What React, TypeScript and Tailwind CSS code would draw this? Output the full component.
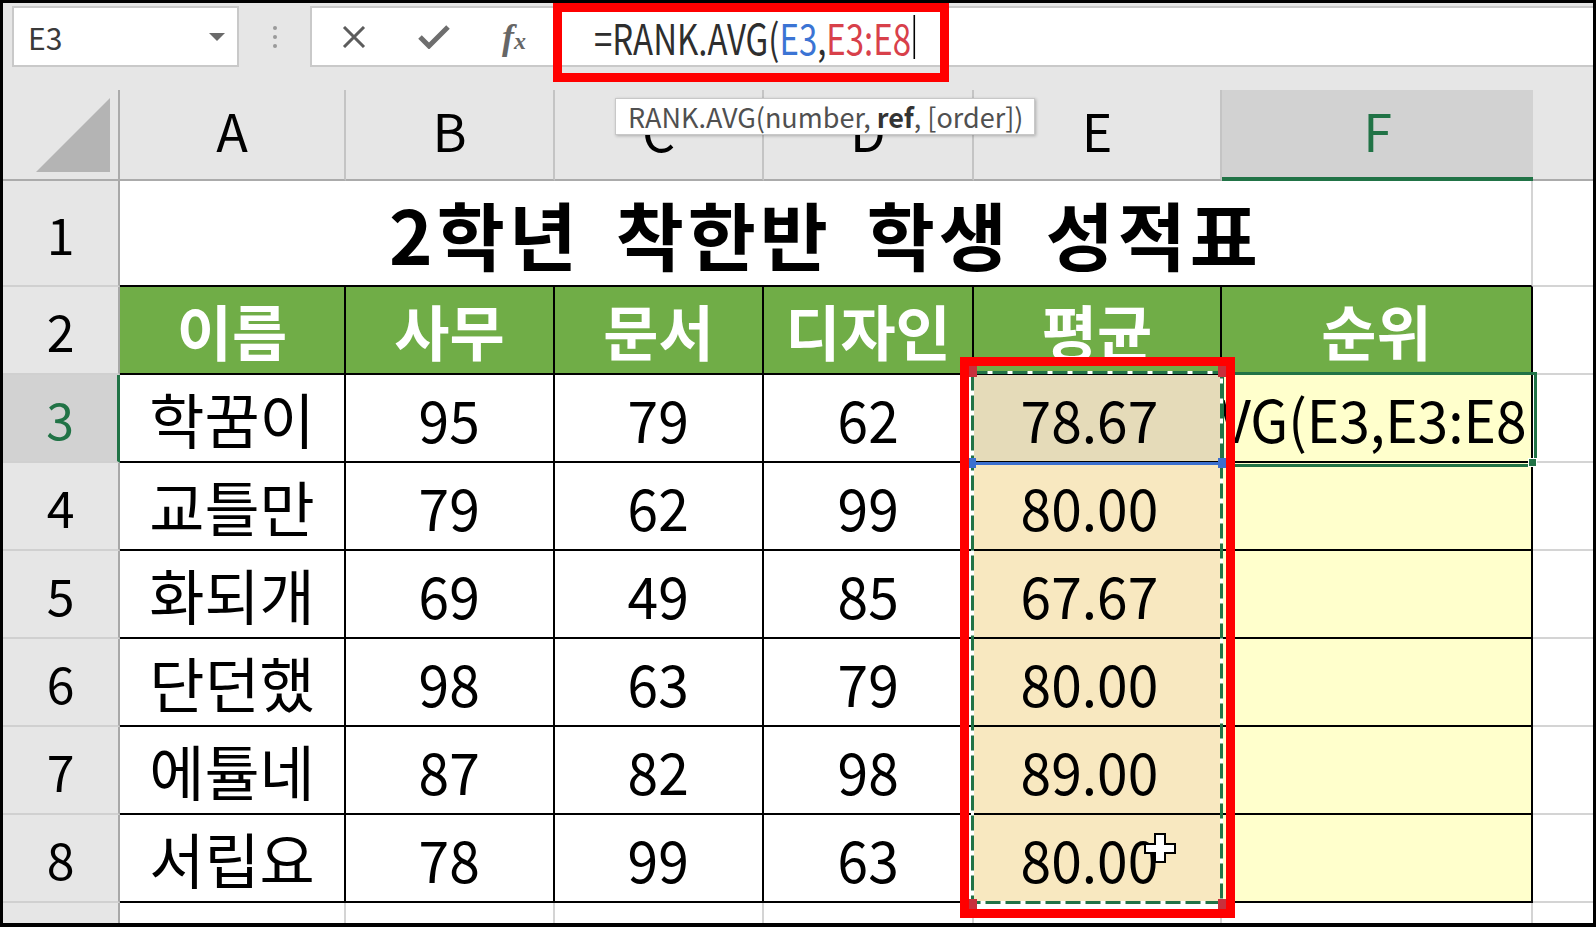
import React from "react";

const heads = ["이름", "사무", "문서", "디자인", "평균", "순위"];
const rows = [
  ["학꿈이", "95", "79", "62", "78.67"],
  ["교틀만", "79", "62", "99", "80.00"],
  ["화되개", "69", "49", "85", "67.67"],
  ["단던했", "98", "63", "79", "80.00"],
  ["에튤네", "87", "82", "98", "89.00"],
  ["서립요", "78", "99", "63", "80.00"],
];

function Num({ children }: { children: React.ReactNode }) {
  return <span className="inline-block scale-x-[0.95] text-[58px] leading-none text-black">{children}</span>;
}

export default function App() {
  return (
    <div className="relative h-[927px] w-[1596px] overflow-hidden border-t-[3px] border-r-[3px] border-b-[4px] border-l-[3px] border-black bg-[#e6e6e6] font-['Noto_Sans_CJK_KR','Noto_Sans',sans-serif]">
      {/* toolbar */}
      <div className="flex h-[87px] items-start pt-[3px]">
        <div className="ml-[9px] flex h-[61px] w-[227px] items-center justify-between border-2 border-[#c9c9c9] bg-white pr-[12px] pl-[14px]">
          <span className="text-[30px] leading-none text-[#3a3a3a]">E3</span>
          <svg width="16" height="8" viewBox="0 0 16 8"><path d="M0 0h16L8 8z" fill="#6a6a6a" /></svg>
        </div>
        <div className="flex h-[61px] w-[71px] flex-col items-center justify-center gap-[5px]">
          <span className="h-[4px] w-[4px] rounded-full bg-[#9a9a9a]" />
          <span className="h-[4px] w-[4px] rounded-full bg-[#9a9a9a]" />
          <span className="h-[4px] w-[4px] rounded-full bg-[#9a9a9a]" />
        </div>
        <div className="flex h-[61px] flex-1 items-center border-2 border-r-0 border-[#c9c9c9] bg-white">
          <div className="ml-[2px] flex w-[80px] justify-center">
            <svg width="24" height="22" viewBox="0 0 24 22"><path d="M2 1l20 20M22 1L2 21" stroke="#5c5c5c" strokeWidth="3" /></svg>
          </div>
          <div className="flex w-[80px] justify-center">
            <svg width="32" height="24" viewBox="0 0 32 24"><path d="M2 12l9 9L30 2" stroke="#6e6e6e" strokeWidth="5" fill="none" /></svg>
          </div>
          <div className="flex w-[80px] justify-center">
            <span className="font-['Liberation_Serif',serif] text-[36px] leading-none font-bold text-[#666] italic">
              f<span className="text-[24px]">x</span>
            </span>
          </div>
          <div className="ml-[40px] flex items-center">
            <span className="inline-flex origin-left scale-x-[0.785] items-center text-[42px] leading-none whitespace-nowrap text-[#2e2e2e]">
              =RANK.AVG(<span className="text-[#3b74d4]">E3</span>,<span className="text-[#d8404a]">E3:E8</span>
              <span className="ml-[3px] inline-block h-[44px] w-[2px] bg-black" />
            </span>
          </div>
        </div>
      </div>

      {/* sheet */}
      <div className="grid grid-cols-[117px_226px_209px_209px_210px_248px_311px_60px] grid-rows-[91px_106px_88px_88px_88px_88px_88px_88px_88px_20px]">
        {/* column headers */}
        <div className="relative border-r-2 border-b-2 border-[#ababab]">
          <svg className="absolute right-[8px] bottom-[7px]" width="74" height="74" viewBox="0 0 74 74"><path d="M74 0v74H0z" fill="#b4b4b4" /></svg>
        </div>
        {["A", "B", "C", "D", "E"].map((c) => (
          <div key={c} className="flex items-center justify-center border-r-2 border-b-2 border-r-[#c4c4c4] border-b-[#ababab] pb-[10px] text-[52px] leading-none text-black">
            {c}
          </div>
        ))}
        <div className="flex items-center justify-center border-b-[4px] border-[#217346] bg-[#d2d2d2] pb-[8px] text-[52px] leading-none text-[#217346]">F</div>
        <div className="border-b-2 border-[#ababab]" />

        {/* row 1 */}
        <div className="flex items-center justify-center border-r-2 border-b-2 border-r-[#a8a8a8] border-b-[#d0d0d0] text-[50px] leading-none text-black">1</div>
        <div className="col-span-6 flex items-center justify-center border-r-2 border-b-2 border-r-[#d4d4d4] border-b-black bg-white">
          <span className="text-[74px] leading-none font-bold tracking-[4px] [word-spacing:14px] text-black">2학년 착한반 학생 성적표</span>
        </div>
        <div className="border-b-2 border-[#d4d4d4] bg-white" />

        {/* row 2 */}
        <div className="flex items-center justify-center border-r-2 border-b-2 border-r-[#a8a8a8] border-b-[#d0d0d0] text-[50px] leading-none text-black">2</div>
        {heads.map((h) => (
          <div key={h} className="flex items-center justify-center border-r-2 border-b-2 border-black bg-[#70ad47] text-[60px] leading-none font-bold text-white">
            {h}
          </div>
        ))}
        <div className="border-b-2 border-[#d4d4d4] bg-white" />

        {/* data rows */}
        {rows.map((r, i) => (
          <React.Fragment key={i}>
            <div
              className={
                i === 0
                  ? "flex items-center justify-center border-r-[3px] border-b-2 border-r-[#217346] border-b-[#d0d0d0] bg-[#d2d2d2] text-[50px] leading-none text-[#217346]"
                  : "flex items-center justify-center border-r-2 border-b-2 border-r-[#a8a8a8] border-b-[#d0d0d0] text-[50px] leading-none text-black"
              }
            >
              {i + 3}
            </div>
            <div className="flex items-center justify-center border-r-2 border-b-2 border-black bg-white text-[60px] leading-none text-black">{r[0]}</div>
            <div className="flex items-center justify-center border-r-2 border-b-2 border-black bg-white"><Num>{r[1]}</Num></div>
            <div className="flex items-center justify-center border-r-2 border-b-2 border-black bg-white"><Num>{r[2]}</Num></div>
            <div className="flex items-center justify-center border-r-2 border-b-2 border-black bg-white"><Num>{r[3]}</Num></div>
            <div className={i === 0 ? "flex items-center justify-center border-r-2 border-b-2 border-black bg-[#e5dbb9] pr-[16px]" : "flex items-center justify-center border-r-2 border-b-2 border-black bg-[#f8e8c0] pr-[16px]"}>
              <Num>{r[4]}</Num>
            </div>
            {i === 0 ? (
              <div className="flex items-center justify-end overflow-hidden border-r-2 border-b-2 border-black bg-[#ffffcc] pr-[4px]">
                <span className="inline-block shrink-0 origin-right scale-x-[0.95] text-[58px] leading-none whitespace-nowrap text-black">=RANK.AVG(E3,E3:E8</span>
              </div>
            ) : (
              <div className="border-r-2 border-b-2 border-black bg-[#ffffcc]" />
            )}
            <div className="border-b-2 border-[#d4d4d4] bg-white" />
          </React.Fragment>
        ))}

        {/* row 9 */}
        <div className="border-r-2 border-r-[#a8a8a8]" />
        {[0, 1, 2, 3, 4, 5].map((k) => (
          <div key={k} className="border-r-2 border-[#d4d4d4] bg-white" />
        ))}
        <div className="bg-white" />
      </div>

      {/* formula bar annotation */}
      <div className="absolute top-0 left-[550px] h-[79px] w-[396px] border-[9px] border-[#ff0000]" />

      {/* function tooltip */}
      <div className="absolute top-[95px] left-[612px] flex h-[37px] w-[420px] items-center border border-[#c8c8c8] bg-white pl-[12px] shadow-[1px_1px_3px_rgba(0,0,0,0.25)]">
        <span className="text-[27px] leading-none whitespace-nowrap text-[#505050]">
          RANK.AVG(number, <span className="font-bold text-[#333]">ref</span>, [order])
        </span>
      </div>

      {/* active cell F3 */}
      <div className="absolute top-[369px] left-[1218px] h-[95px] w-[316px] border-[3px] border-[#217346]" />
      <div className="absolute top-[455px] left-[1525px] h-[9px] w-[9px] border border-white bg-[#217346]" />

      {/* range E3:E8 marching ants */}
      <svg className="absolute top-[368px] left-[968px]" width="252" height="533" viewBox="0 0 252 533">
        <rect x="1.5" y="1.5" width="249" height="530" fill="none" stroke="white" strokeWidth="3" />
        <rect x="1.5" y="1.5" width="249" height="530" fill="none" stroke="#217346" strokeWidth="3" strokeDasharray="15 5" />
      </svg>
      <div className="absolute top-[459px] left-[968px] h-[3px] w-[252px] bg-[#3b6fcf]" />
      <div className="absolute top-[455px] left-[963px] h-[10px] w-[10px] bg-[#3b6fcf]" />
      <div className="absolute top-[455px] left-[1215px] h-[10px] w-[10px] bg-[#3b6fcf]" />
      <div className="absolute top-[363px] left-[963px] h-[11px] w-[11px] bg-[#c8303c]" />
      <div className="absolute top-[363px] left-[1215px] h-[11px] w-[11px] bg-[#c8303c]" />
      <div className="absolute top-[896px] left-[963px] h-[11px] w-[11px] bg-[#c8303c]" />
      <div className="absolute top-[896px] left-[1215px] h-[11px] w-[11px] bg-[#c8303c]" />

      {/* range annotation */}
      <div className="absolute top-[354px] left-[957px] h-[561px] w-[275px] border-[9px] border-[#ff0000]" />

      {/* fill cursor */}
      <svg className="absolute top-[829px] left-[1140px]" width="34" height="32" viewBox="0 0 34 32">
        <path d="M12 2h10v10h10v9H22v9H12v-9H2v-9h10z" fill="white" stroke="black" strokeWidth="2" />
      </svg>
    </div>
  );
}
